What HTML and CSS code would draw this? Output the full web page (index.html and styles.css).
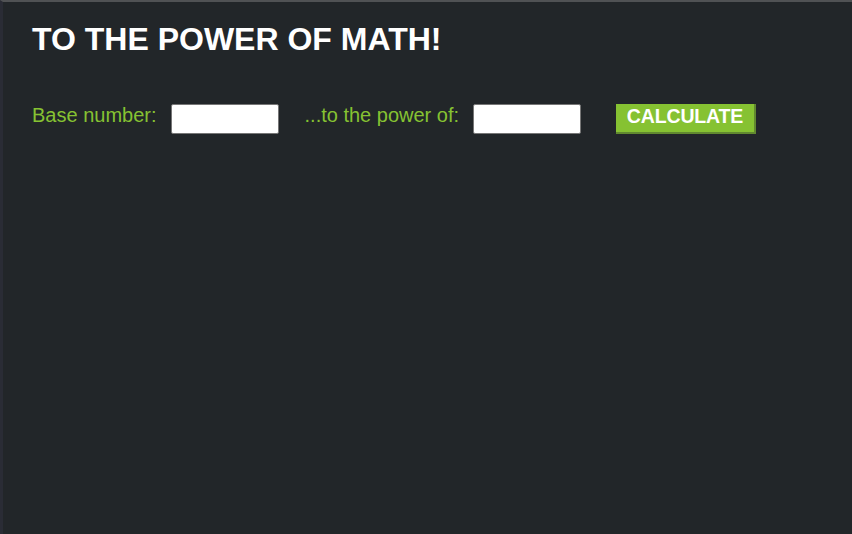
FILE: index.html
```html
<!DOCTYPE html>
<html>
<head>
<meta charset="utf-8">
<link rel="stylesheet" href="styles.css">
</head>
<body>
<div class="page">
  <h1 class="title">TO THE POWER OF MATH!</h1>
  <div class="row">
    <label class="label label-base" for="base">Base number:</label>
    <input class="field field-base" id="base" type="text">
    <label class="label label-power" for="power">...to the power of:</label>
    <input class="field field-power" id="power" type="text">
    <button class="calc">CALCULATE</button>
  </div>
</div>
</body>
</html>
```

FILE: styles.css
```css
html, body {
  margin: 0;
  padding: 0;
  height: 100%;
}
body {
  background: #222629;
  font-family: "Liberation Sans", Arial, sans-serif;
}
.page {
  box-sizing: border-box;
  height: 100%;
  border-top: 2px solid #505254;
  border-left: 3px solid #2a2c35;
  padding: 19px 0 0 29px;
}
.title {
  margin: 0;
  color: #ffffff;
  font-size: 32px;
  font-weight: bold;
  line-height: 37px;
}
.row {
  display: flex;
  align-items: flex-start;
  margin-top: 46px;
}
.label {
  color: #86c232;
  font-size: 20px;
  line-height: 23px;
}
.label-base {
  margin-right: 14px;
}
.label-power {
  margin-right: 14px;
}
.field {
  box-sizing: border-box;
  width: 108px;
  height: 30px;
  border: 1px solid #767676;
  border-radius: 2px;
  background: #fff;
  padding: 0;
}
.field-base {
  margin-right: 26px;
}
.field-power {
  margin-right: 35px;
}
.calc {
  box-sizing: border-box;
  height: 30px;
  width: 140px;
  background: #86c232;
  color: #fff;
  font-family: "Liberation Sans", Arial, sans-serif;
  font-weight: bold;
  font-size: 19.5px;
  letter-spacing: -0.15px;
  line-height: 20px;
  border: none;
  border-right: 2px solid #61892f;
  border-bottom: 2px solid #61892f;
  padding: 0 0 5px 0;
  border-radius: 0;
}
```
